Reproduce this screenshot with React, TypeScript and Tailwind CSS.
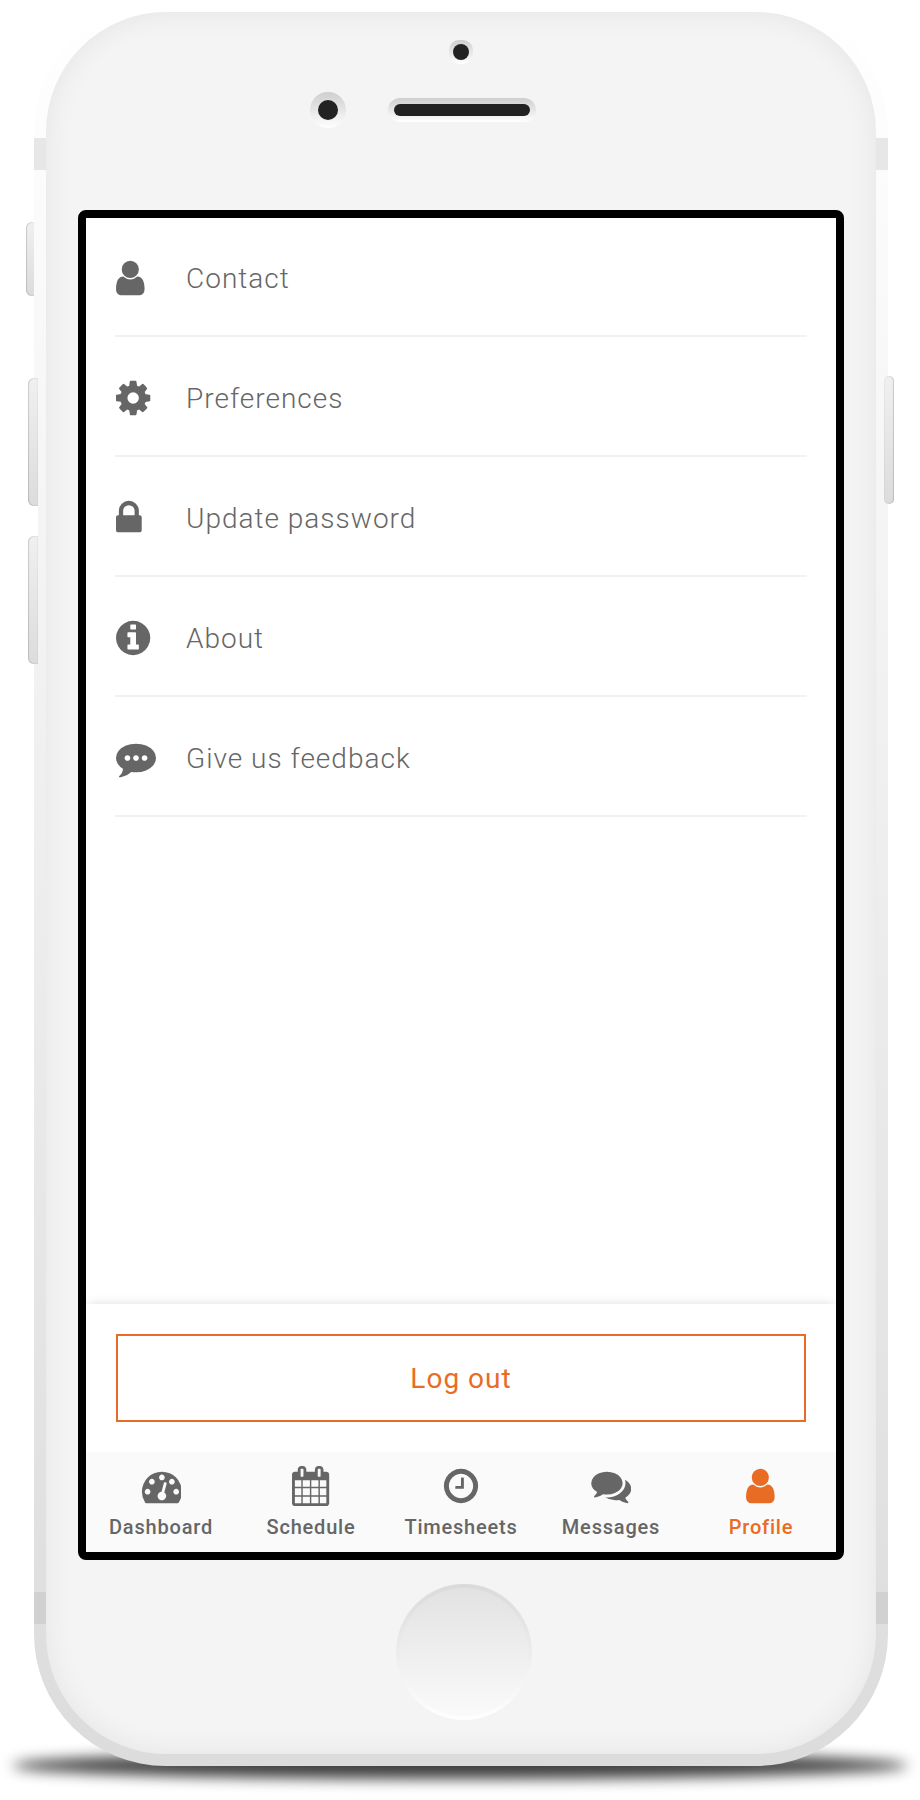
import React from "react";

const PATHS = {
  user: "M1536 1399q0 109-62.5 187t-150.5 78h-854q-88 0-150.5-78t-62.5-187q0-85 8.5-160.5t31.5-152 58.5-131 94-89 134.5-34.5q131 128 313 128t313-128q76 0 134.5 34.5t94 89 58.5 131 31.5 152 8.5 160.5zm-256-887q0 159-112.5 271.5t-271.5 112.5-271.5-112.5-112.5-271.5 112.5-271.5 271.5-112.5 271.5 112.5 112.5 271.5z",
  cog: "M1152 896q0-106-75-181t-181-75-181 75-75 181 75 181 181 75 181-75 75-181zm512-109v222q0 12-8 23t-20 13l-185 28q-19 54-39 91 35 50 107 138 10 12 10 25t-9 23q-27 37-99 108t-94 71q-12 0-26-9l-138-108q-44 23-91 38-16 136-29 186-7 28-36 28h-222q-14 0-24.5-8.5t-11.5-21.5l-28-184q-49-16-90-37l-141 107q-10 9-25 9-14 0-25-11-126-114-165-168-7-10-7-23 0-12 8-23 15-21 51-66.5t54-70.5q-27-50-41-99l-183-27q-13-2-21-12.5t-8-23.5v-222q0-12 8-23t19-13l186-28q14-46 39-92-40-57-107-138-10-12-10-24 0-10 9-23 26-36 98.5-107.5t94.5-71.5q13 0 26 10l138 107q44-23 91-38 16-136 29-186 7-28 36-28h222q14 0 24.5 8.5t11.5 21.5l28 184q49 16 90 37l142-107q9-9 24-9 13 0 25 10 129 119 165 170 7 8 7 22 0 12-8 23-15 21-51 66.5t-54 70.5q26 50 41 98l183 28q13 2 21 12.5t8 23.5z",
  lock: "M640 768h512v-192q0-106-75-181t-181-75-181 75-75 181v192zm832 96v576q0 40-28 68t-68 28h-960q-40 0-68-28t-28-68v-576q0-40 28-68t68-28h32v-192q0-184 132-316t316-132 316 132 132 316v192h32q40 0 68 28t28 68z",
  info: "M1152 1376v-160q0-14-9-23t-23-9h-96v-512q0-14-9-23t-23-9h-320q-14 0-23 9t-9 23v160q0 14 9 23t23 9h96v320h-96q-14 0-23 9t-9 23v160q0 14 9 23t23 9h448q14 0 23-9t9-23zm-128-896v-160q0-14-9-23t-23-9h-192q-14 0-23 9t-9 23v160q0 14 9 23t23 9h192q14 0 23-9t9-23zm640 416q0 209-103 385.5t-279.5 279.5-385.5 103-385.5-103-279.5-279.5-103-385.5 103-385.5 279.5-279.5 385.5-103 385.5 103 279.5 279.5 103 385.5z",
  comment:
    "M640 896q0-53-37.5-90.5t-90.5-37.5-90.5 37.5-37.5 90.5 37.5 90.5 90.5 37.5 90.5-37.5 37.5-90.5zm384 0q0-53-37.5-90.5t-90.5-37.5-90.5 37.5-37.5 90.5 37.5 90.5 90.5 37.5 90.5-37.5 37.5-90.5zm384 0q0-53-37.5-90.5t-90.5-37.5-90.5 37.5-37.5 90.5 37.5 90.5 90.5 37.5 90.5-37.5 37.5-90.5zm384 0q0 174-120 321.5t-326 233-450 85.5q-110 0-211-18-173 173-435 229-52 10-86 13-12 1-22-6t-13-18q-4-15 20-37 5-5 23.5-21.5t25.5-23.5 23.5-25.5 24-31.5 20.5-37 20-48 14.5-57.5 12.5-72.5q-146-90-229.5-216.5t-83.5-269.5q0-174 120-321.5t326-233 450-85.5 450 85.5 326 233 120 321.5z",
  gauge:
    "M384 1152q0-53-37.5-90.5t-90.5-37.5-90.5 37.5-37.5 90.5 37.5 90.5 90.5 37.5 90.5-37.5 37.5-90.5zm192-448q0-53-37.5-90.5t-90.5-37.5-90.5 37.5-37.5 90.5 37.5 90.5 90.5 37.5 90.5-37.5 37.5-90.5zm428 481l101-382q6-26-7.5-48.5t-38.5-29.5-48 6.5-30 39.5l-101 382q-60 5-107 43.5t-63 98.5q-20 77 20 146t117 89 146-20 89-117q16-60-6-117t-72-91zm660-33q0-53-37.5-90.5t-90.5-37.5-90.5 37.5-37.5 90.5 37.5 90.5 90.5 37.5 90.5-37.5 37.5-90.5zm-640-640q0-53-37.5-90.5t-90.5-37.5-90.5 37.5-37.5 90.5 37.5 90.5 90.5 37.5 90.5-37.5 37.5-90.5zm448 192q0-53-37.5-90.5t-90.5-37.5-90.5 37.5-37.5 90.5 37.5 90.5 90.5 37.5 90.5-37.5 37.5-90.5zm320 448q0 261-141 483-19 29-54 29h-1402q-35 0-54-29-141-221-141-483 0-182 71-348t191-286 286-191 348-71 348 71 286 191 191 286 71 348z",
  calendar:
    "M192 1664h288v-288h-288v288zm352 0h320v-288h-320v288zm-352-352h288v-320h-288v320zm352 0h320v-320h-320v320zm-352-384h288v-288h-288v288zm736 736h320v-288h-320v288zm-384-736h320v-288h-320v288zm768 736h288v-288h-288v288zm-384-352h320v-320h-320v320zm-352-864v-288q0-13-9.5-22.5t-22.5-9.5h-64q-13 0-22.5 9.5t-9.5 22.5v288q0 13 9.5 22.5t22.5 9.5h64q13 0 22.5-9.5t9.5-22.5zm736 864h288v-320h-288v320zm-384-384h320v-288h-320v288zm384 0h288v-288h-288v288zm32-480v-288q0-13-9.5-22.5t-22.5-9.5h-64q-13 0-22.5 9.5t-9.5 22.5v288q0 13 9.5 22.5t22.5 9.5h64q13 0 22.5-9.5t9.5-22.5zm384-64v1280q0 52-38 90t-90 38h-1408q-52 0-90-38t-38-90v-1280q0-52 38-90t90-38h128v-96q0-66 47-113t113-47h64q66 0 113 47t47 113v96h384v-96q0-66 47-113t113-47h64q66 0 113 47t47 113v96h128q52 0 90 38t38 90z",
  clock:
    "M1024 544v448q0 14-9 23t-23 9h-320q-14 0-23-9t-9-23v-64q0-14 9-23t23-9h224v-352q0-14 9-23t23-9h64q14 0 23 9t9 23zm416 352q0-148-73-273t-198-198-273-73-273 73-198 198-73 273 73 273 198 198 273 73 273-73 198-198 73-273zm224 0q0 209-103 385.5t-279.5 279.5-385.5 103-385.5-103-279.5-279.5-103-385.5 103-385.5 279.5-279.5 385.5-103 385.5 103 279.5 279.5 103 385.5z",
  comments:
    "M1408 768q0 139-94 257t-256.5 186.5-353.5 68.5q-86 0-176-16-124 88-278 128-36 9-86 16h-3q-11 0-20.5-8t-11.5-21q-1-3-1-6.5t.5-6.5 2-6l2.5-5 3.5-5.5 4-5 4.5-5 4-4.5q5-6 23-25t26-29.5 22.5-29 25-38.5 20.5-44q-124-72-195-177t-71-224q0-139 94-257t256.5-186.5 353.5-68.5 353.5 68.5 256.5 186.5 94 257zm384 256q0 120-71 224.5t-195 176.5q10 24 20.5 44t25 38.5 22.5 29 26 29.5 23 25q1 1 4 4.5t4.5 5 4 5 3.5 5.5l2.5 5 2 6 .5 6.5-1 6.5q-3 14-13 22t-22 7q-50-7-86-16-154-40-278-128-90 16-176 16-271 0-472-132 58 4 88 4 161 0 309-45t264-129q125-92 192-212t67-254q0-77-23-152 129 71 204 178t75 230z",
};

type IconName = keyof typeof PATHS;

function Icon({ name, left = 0 }: { name: IconName; left?: number }) {
  return (
    <svg viewBox={`${left} 0 1792 1792`} className="block size-10 shrink-0 fill-current">
      <path d={PATHS[name]} />
    </svg>
  );
}

const MENU: { icon: IconName; left: number; label: string }[] = [
  { icon: "user", left: 256, label: "Contact" },
  { icon: "cog", left: 128, label: "Preferences" },
  { icon: "lock", left: 320, label: "Update password" },
  { icon: "info", left: 128, label: "About" },
  { icon: "comment", left: 0, label: "Give us feedback" },
];

const TABS: { icon: IconName; label: string; left: number; active?: boolean }[] = [
  { icon: "gauge", label: "Dashboard", left: -40 },
  { icon: "calendar", label: "Schedule", left: 18 },
  { icon: "clock", label: "Timesheets", left: 0 },
  { icon: "comments", label: "Messages", left: -10 },
  { icon: "user", label: "Profile", left: 30, active: true },
];

function Screen() {
  return (
    <div className="flex h-[1350px] w-[766px] flex-col overflow-hidden rounded-[8px] border-8 border-black bg-white">
      <ul className="-mt-px flex-1 px-[29px] text-[#666]">
        {MENU.map((m) => (
          <li key={m.label} className="flex h-[120px] items-center border-b-2 border-[#f2f2f2] pl-px">
            <span className="w-[70px] pt-[3px]">
              <Icon name={m.icon} left={m.left} />
            </span>
            <span className="pt-[6px] text-[28px] font-light tracking-[1px]">{m.label}</span>
          </li>
        ))}
      </ul>
      <div className="h-[148px] bg-white px-[30px] py-[30px] shadow-[0_-2px_10px_-2px_rgba(0,0,0,0.13)]">
        <button className="h-[88px] w-full border-2 border-[#e96c25] pt-[2px] text-[28px] tracking-[1px] text-[#e96c25]">
          Log out
        </button>
      </div>
      <nav className="relative grid h-[100px] grid-cols-5 bg-[#fafafa] text-[#666]">
        {TABS.map((t) => (
          <div
            key={t.label}
            className={t.active ? "flex flex-col items-center pt-[13.6px] text-[#e96c25]" : "flex flex-col items-center pt-[13.6px]"}
          >
            <Icon name={t.icon} left={t.left} />
            <span className="mt-[7.4px] text-[20px] leading-[28px] font-medium tracking-[0.8px]">{t.label}</span>
          </div>
        ))}
      </nav>
    </div>
  );
}

export default function App() {
  return (
    <div className="relative flex h-[1800px] w-[920px] overflow-hidden bg-white pl-[34px] font-[Roboto,sans-serif]">
      <div className="absolute top-[1752px] left-[12px] h-[27px] w-[896px] rounded-[50%] bg-black/75 blur-[7px]" />
      <div className="absolute top-[222px] left-[26px] h-[74px] w-[16px] rounded-[6px] bg-linear-to-b from-[#f0f0f0] to-[#dcdcdc] shadow-[inset_1px_0_1px_rgba(0,0,0,0.12),inset_0_0_2px_rgba(0,0,0,0.12)]" />
      <div className="relative h-[1766px] w-[854px] shrink-0 rounded-[132px] bg-linear-to-b from-white to-[#dcdcdc] p-3">
        <div className="absolute top-[138px] left-0 h-8 w-full bg-[#e7e7e7]" />
        <div className="absolute top-[1592px] left-0 h-8 w-full bg-[#d1d1d1]" />
        <div className="absolute top-[382px] left-0 h-[280px] w-1 bg-white" />
        <div className="absolute top-[378px] left-[-6px] h-[128px] w-[10px] rounded-l-[6px] bg-linear-to-b from-[#f0f0f0] to-[#dcdcdc] shadow-[inset_1px_0_1px_rgba(0,0,0,0.12),inset_0_0_2px_rgba(0,0,0,0.12)]" />
        <div className="absolute top-[536px] left-[-6px] h-[128px] w-[10px] rounded-l-[6px] bg-linear-to-b from-[#f0f0f0] to-[#dcdcdc] shadow-[inset_1px_0_1px_rgba(0,0,0,0.12),inset_0_0_2px_rgba(0,0,0,0.12)]" />
        <div className="absolute top-[376px] right-[-6px] h-[128px] w-[10px] rounded-[5px] bg-linear-to-b from-[#f0f0f0] to-[#dcdcdc] shadow-[inset_-1px_0_1px_rgba(0,0,0,0.12),inset_0_0_2px_rgba(0,0,0,0.12)]" />
        <div className="relative flex h-[1742px] w-[830px] flex-col items-center rounded-[120px] bg-[#f4f4f4] shadow-[inset_0_0_30px_rgba(0,0,0,0.065)]">
          <div className="mt-7 flex size-6 items-center justify-center rounded-[10px] bg-linear-to-b from-[#cecece] to-white">
            <div className="size-4 rounded-full bg-[#222]" />
          </div>
          <div className="mt-7 flex w-full items-center pl-[264px]">
            <div className="flex size-9 items-center justify-center rounded-full bg-linear-to-b from-[#cecece] to-white">
              <div className="size-5 rounded-full bg-[#222]" />
            </div>
            <div className="ml-[42px] flex h-6 w-[148px] items-center justify-center rounded-full bg-linear-to-b from-[#cecece] to-white">
              <div className="h-3 w-[136px] rounded-full bg-[#222]" />
            </div>
          </div>
          <div className="mt-[82px]">
            <Screen />
          </div>
          <div className="mt-6 ml-[6px] flex size-[136px] items-center justify-center rounded-full bg-linear-to-b from-[#dadada] to-white">
            <div className="size-32 rounded-full bg-linear-to-b from-[#e2e2e2] to-[#fafafa]" />
          </div>
        </div>
      </div>
    </div>
  );
}
